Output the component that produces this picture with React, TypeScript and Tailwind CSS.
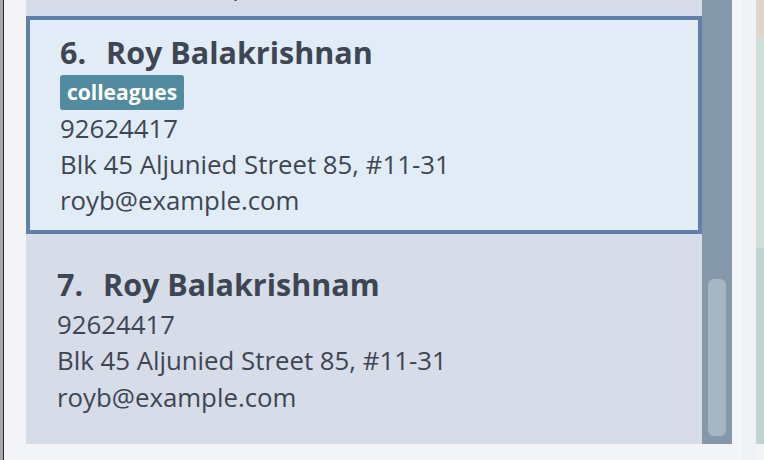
import React from "react";

const font = { fontFamily: '"Open Sans", "Noto Sans", sans-serif' };

function Line({ children }: { children: React.ReactNode }) {
  return <div className="text-[25.8px] leading-[36px] whitespace-nowrap">{children}</div>;
}

function Name({ id, name }: { id: number; name: string }) {
  return (
    <div className="flex items-baseline text-[30.5px] leading-[40px] font-bold whitespace-nowrap">
      <span className="w-[46px]">{id}.</span>
      <span>{name}</span>
    </div>
  );
}

export default function App() {
  return (
    <div className="w-[764px] h-[460px] bg-[#f2f4f8] flex overflow-hidden text-[#3e4653]" style={font}>
      {/* clipped window edge on the left */}
      <div className="w-[3px] h-full bg-[#a9a9a9]" />
      <div className="w-px h-full bg-[#2a2a2a]" />

      <div className="ml-[22px] w-[706px] h-[444px] flex">
        <div className="w-[676px] h-full flex flex-col overflow-hidden">
          {/* bottom of card 5, scrolled out of view */}
          <div className="h-[16px] shrink-0 bg-[#d6dce8] overflow-hidden pl-[31px]">
            <div className="-mt-[33px] pl-[30px]">
              <Line>irfan@example.com</Line>
            </div>
          </div>

          {/* selected card */}
          <div className="h-[218px] shrink-0 bg-[#e2ecf6] border-4 border-[#5e80aa] pl-[30px] pt-[12px]">
            <Name id={6} name="Roy Balakrishnan" />
            <div className="mt-[3px] flex">
              <span className="h-[35px] px-[7px] rounded-[3px] bg-[#528b9f] text-white text-[21px] font-bold leading-[35px]">
                colleagues
              </span>
            </div>
            <Line>92624417</Line>
            <Line>Blk 45 Aljunied Street 85, #11-31</Line>
            <Line>royb@example.com</Line>
          </div>

          <div className="flex-1 bg-[#d6dce8] pl-[31px] pt-[30px]">
            <Name id={7} name="Roy Balakrishnam" />
            <div className="mt-[2px]">
              <Line>92624417</Line>
            </div>
            <Line>Blk 45 Aljunied Street 85, #11-31</Line>
            <div className="mt-px">
              <Line>royb@example.com</Line>
            </div>
          </div>
        </div>

        {/* scrollbar */}
        <div className="w-[30px] h-full bg-[#8598a9] flex flex-col pt-[279px] px-[6px]">
          <div className="h-[157px] rounded-[6px] bg-[#a4b5c3]" />
        </div>
      </div>

      <div className="w-[10px] h-full bg-[#f4f5f9]" />
      <div className="w-[14px] h-full bg-[#f1f2f6]" />
      <div className="w-[8px] h-[444px] flex flex-col">
        <div className="h-[37px] bg-[#ded6cc]" />
        <div className="h-[211px] bg-[#d0e0d8]" />
        <div className="flex-1 bg-[#bfd4ce]" />
      </div>
    </div>
  );
}
